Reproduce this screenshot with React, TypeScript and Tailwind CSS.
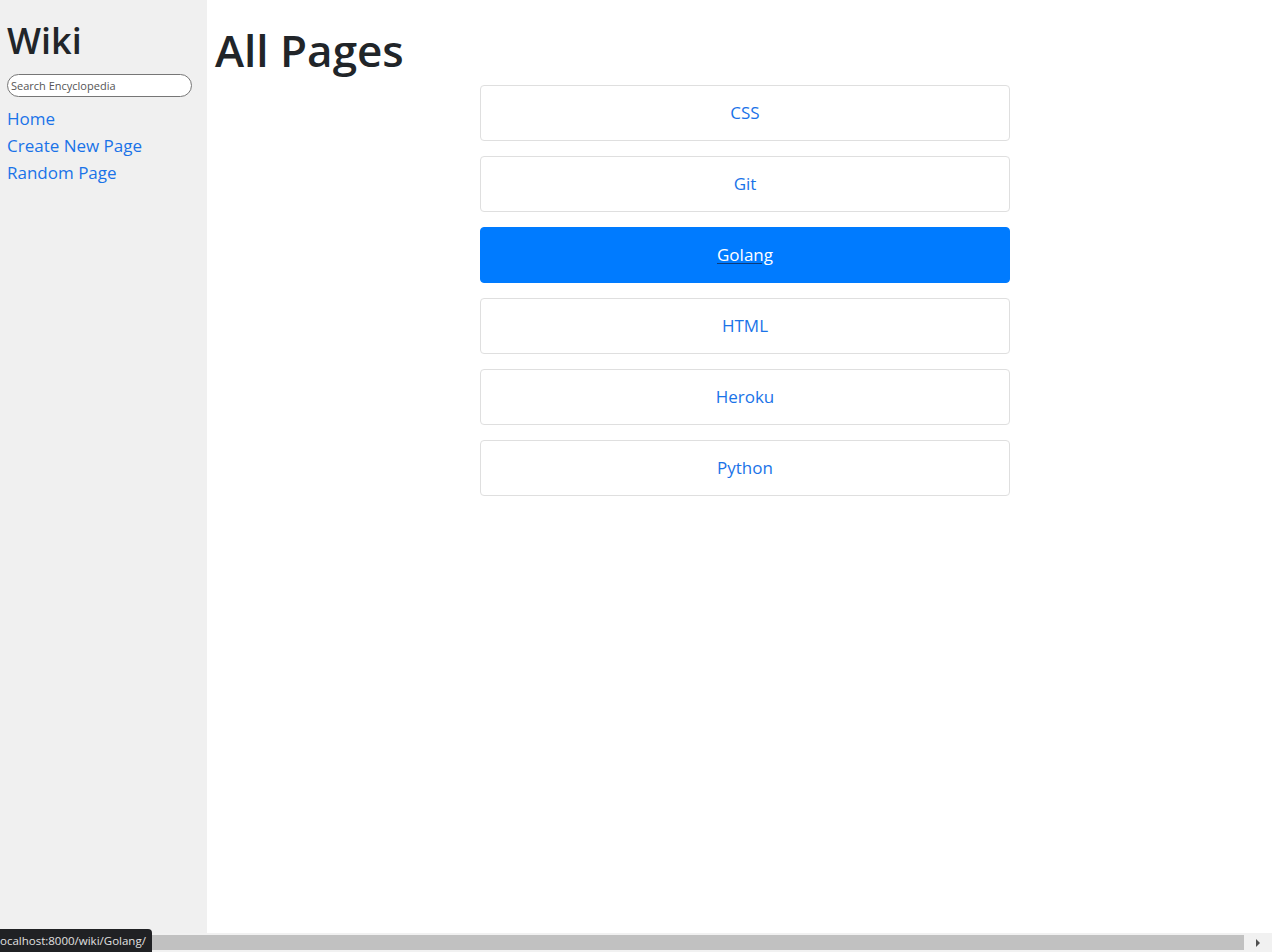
const pages = ["CSS", "Git", "Golang", "HTML", "Heroku", "Python"];

function Sidebar() {
    return (
        <div className="w-[207px] shrink-0 bg-[#f0f0f0] px-[7px] pt-[19px]">
            <h2 className="text-[36px] leading-[1.2] font-semibold text-[#212529]">Wiki</h2>
            <input
                className="mt-[12px] w-[185px] h-[23px] rounded-full border border-[#767676] bg-white px-[3px] text-[11px] text-[#212529] placeholder:text-[#555] outline-none"
                placeholder="Search Encyclopedia"
            />
            <div className="mt-[8px] flex flex-col">
                <a href="#" className="text-[#1a73e8] text-[17px] leading-[27px]">Home</a>
                <a href="#" className="text-[#1a73e8] text-[17px] leading-[27px]">Create New Page</a>
                <a href="#" className="text-[#1a73e8] text-[17px] leading-[27px]">Random Page</a>
            </div>
        </div>
    );
}

function App() {
    return (
        <div className="relative h-[952px] w-[1272px] overflow-hidden flex flex-col bg-white font-['Open_Sans',sans-serif]">
            <div className="flex flex-1">
                <Sidebar />
                <div className="flex-1 pl-[8px] pt-[24px]">
                    <h1 className="text-[44px] leading-[1.2] font-semibold text-[#212529]">All Pages</h1>
                    <div className="ml-[265px] mt-[8px] w-[530px] flex flex-col gap-[15px]">
                        {pages.map((p) => (
                            <a
                                key={p}
                                href="#"
                                className={
                                    p === "Golang"
                                        ? "h-[56px] flex items-center justify-center rounded-[4px] border border-[#007bff] bg-[#007bff] text-white underline decoration-[#0d3b7a] underline-offset-2 text-[17px]"
                                        : "h-[56px] flex items-center justify-center rounded-[4px] border border-[#dfdfdf] bg-white text-[#1a73e8] text-[17px]"
                                }
                            >
                                {p}
                            </a>
                        ))}
                    </div>
                </div>
            </div>
            <div className="h-[19px] bg-[#f1f1f1] flex items-center">
                <div className="w-[1244px] h-[15px] bg-[#c1c1c1]" />
                <div className="flex-1 flex items-center justify-center">
                    <svg width="6" height="8" viewBox="0 0 6 8"><path d="M1 0 L5 4 L1 8 Z" fill="#505050" /></svg>
                </div>
            </div>
            <div className="absolute left-0 bottom-0 h-[23px] pr-[6px] bg-[#202124] rounded-tr-[4px] flex items-center text-[11.5px] text-[#e0e0e0]">
                ocalhost:8000/wiki/Golang/
            </div>
        </div>
    );
}

export default App;
